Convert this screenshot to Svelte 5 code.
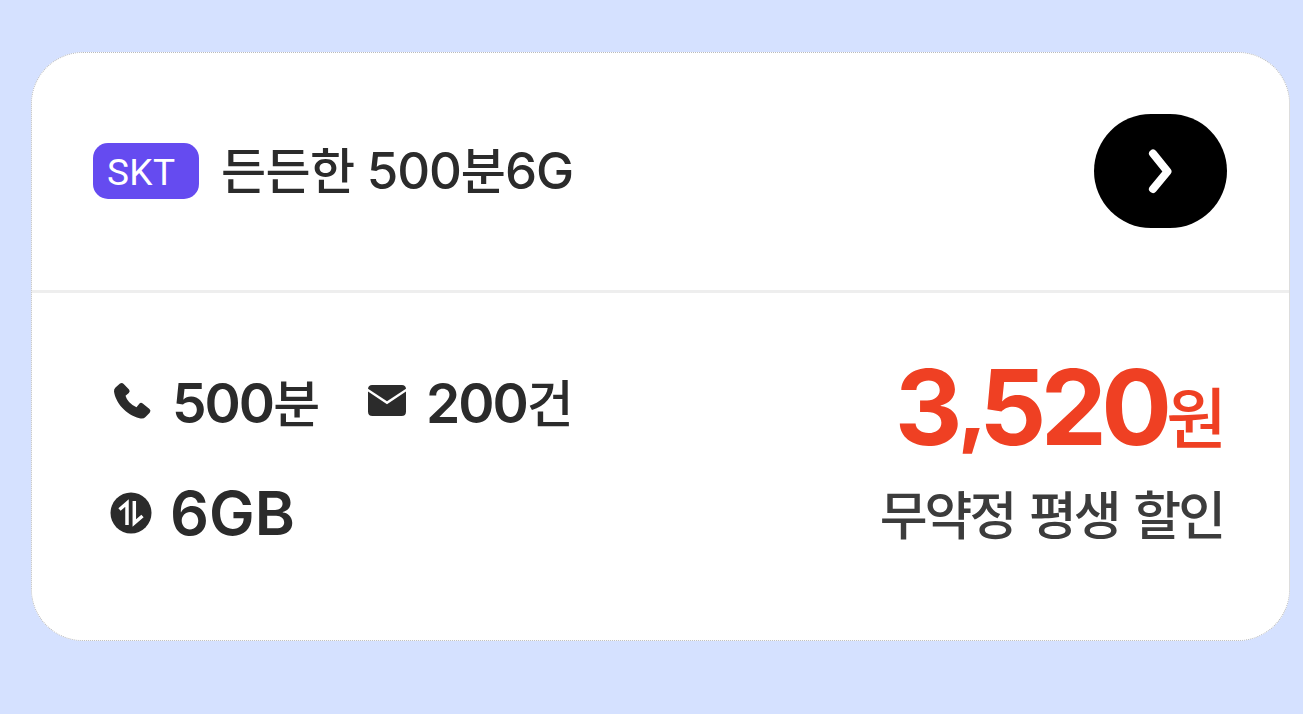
<script>
    export let plan = {
        carrier: 'SKT',
        price: ['3', '520'],
        unit: '원',
        note: '무약정 평생 할인'
    }
</script>

<main>
    <section class="card">
        <header>
            <span class="badge">{plan.carrier}</span>
            <h1><span class="ko">든든한</span> 500<span class="ko">분</span>6G</h1>
            <button aria-label="자세히 보기">
                <svg width="34" height="50" viewBox="0 0 34 50">
                    <path d="M9 7.500 23.500 25.500 9 43" />
                </svg>
            </button>
        </header>
        <div class="body">
            <div class="specs">
                <div class="row">
                    <svg class="phone" width="40" height="40" viewBox="0 0 40 40">
                        <path d="M3.500 6.500 8 2.600Q10 1.200 11.700 3.100L17 8.500Q18.500 10.300 16.800 12L13.500 14.700Q15.500 22 24.500 26.200L27.300 22.800Q28.700 21 30.700 22.500L37.500 28Q39.400 29.800 37.700 31.700L33.500 35.900Q31.500 38.200 27.500 37.200C14 34 3.500 21.500 2 10.500Q1.800 8 3.500 6.500Z" />
                    </svg>
                    <span class="value voice">500<span class="ko">분</span></span>
                    <svg class="mail" width="38" height="31" viewBox="0 0 38 31">
                        <path d="M4 0H34Q37.500 0 38 3.700L19 16.300 0 3.700Q.5 0 4 0Z" />
                        <path d="M0 6.600 19 19.300 38 6.600V26.500Q38 31 33.500 31H4.500Q0 31 0 26.500Z" />
                    </svg>
                    <span class="value">200<span class="ko">건</span></span>
                </div>
                <div class="row data">
                    <svg class="swap" width="42" height="42" viewBox="0 0 42 42">
                        <circle cx="21" cy="21" r="20.500" />
                        <path d="M9.500 17.500 17 11V33M24.300 9V31L32.500 24" />
                    </svg>
                    <span class="value big">6GB</span>
                </div>
            </div>
            <div class="pay">
                <p class="price">{plan.price[0]}<span class="comma">,</span>{plan.price[1]}<span class="won">{plan.unit}</span></p>
                <p class="note">{plan.note}</p>
            </div>
        </div>
    </section>
</main>

<style>
:global(body){
    background: #d5e1ff;
}
*{
    padding: 0;
    margin: 0;
    box-sizing: border-box;
}
main{
    height: 714px;
    padding: 52px 13px 73px 31px;
    font-family: Inter, "Noto Sans CJK KR", sans-serif;
    color: #2b2b2b;
}
.card{
    height: 589px;
    background: #fff;
    border: 1px dotted #bbb;
    border-radius: 52px;
    overflow: hidden;
}
header{
    display: flex;
    align-items: center;
    height: 240px;
    padding: 0 62px 1px 61px;
    border-bottom: 3px solid #eee;
}
.badge{
    width: 106px;
    height: 56px;
    padding-left: 14px;
    border-radius: 15px;
    background: #654bf0;
    color: #fff;
    font-family: Roboto, sans-serif;
    font-size: 37px;
    line-height: 59px;
    letter-spacing: 0.4px;
}
h1{
    flex: 1;
    margin-left: 22px;
    font-size: 51px;
    font-weight: 500;
    line-height: 60px;
    letter-spacing: -1.2px;
    white-space: nowrap;
}
h1 .ko{
    font-size: 49px;
    letter-spacing: -0.6px;
}
.ko{
    font-family: "Noto Sans CJK KR", sans-serif;
    line-height: 1;
}
button{
    display: flex;
    align-items: center;
    justify-content: center;
    width: 133px;
    height: 114px;
    border: 0;
    border-radius: 57px;
    background: #000;
}
button svg{
    fill: none;
    stroke: #fff;
    stroke-width: 8;
    stroke-linecap: round;
    stroke-linejoin: round;
}
.body{
    display: flex;
    justify-content: space-between;
    padding: 63px 64px 0 79px;
}
.specs{
    padding-top: 12px;
}
.row{
    display: flex;
    align-items: center;
    height: 70px;
    fill: #2b2b2b;
}
.data{
    margin-top: 40px;
}
.value{
    font-size: 55px;
    font-weight: 600;
    line-height: 70px;
    letter-spacing: -2px;
    white-space: nowrap;
}
.value .ko{
    font-size: 51px;
    font-weight: 500;
}
.voice{
    width: 146px;
}
.phone{
    margin: 0 20px 5px 1px;
}
.mail{
    margin: 0 20px 6px 50px;
}
.swap{
    margin: 0 18px 0 -1px;
}
.swap path{
    fill: none;
    stroke: #fff;
    stroke-width: 3.5;
}
.big{
    font-size: 61px;
    letter-spacing: 0;
}
.pay{
    text-align: right;
    white-space: nowrap;
}
.price{
    padding-top: 1px;
    color: #ef4023;
    font-size: 105px;
    font-weight: 700;
    line-height: 100px;
    letter-spacing: -5.7px;
}
.comma{
    margin-left: 1px;
    font-size: 82px;
    font-weight: 800;
    line-height: 1;
    letter-spacing: -7.5px;
    vertical-align: 8px;
}
.won{
    margin-left: 0;
    font-family: "Noto Sans CJK KR", sans-serif;
    font-size: 66px;
    font-weight: 500;
    line-height: 1;
    letter-spacing: -2px;
    vertical-align: 2px;
}
.note{
    margin: 18px 2px 0 0;
    color: #3c3c3c;
    font-family: "Noto Sans CJK KR", sans-serif;
    font-size: 52px;
    font-weight: 500;
    line-height: 76px;
    letter-spacing: -3px;
    word-spacing: 6px;
}
</style>
